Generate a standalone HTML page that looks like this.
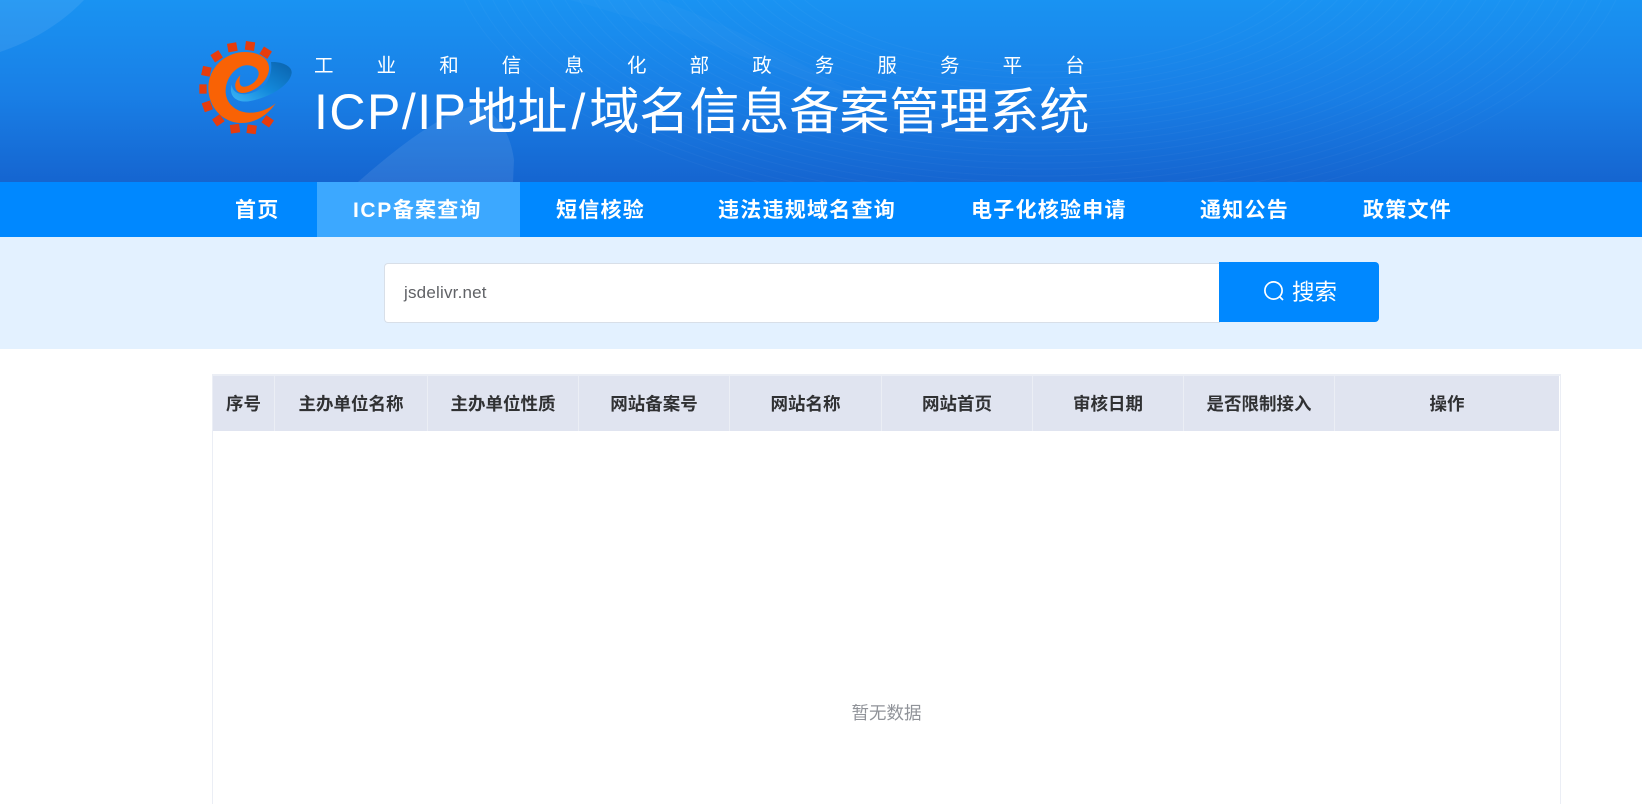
<!DOCTYPE html>
<html lang="zh-CN"><head><meta charset="utf-8"><title>ICP/IP地址/域名信息备案管理系统</title>
<style>
*{box-sizing:border-box}
html,body{margin:0;padding:0;width:1642px;height:797px;overflow:hidden;background:#fff;font-family:"Liberation Sans","Noto Sans CJK SC",sans-serif}
.a{position:absolute;white-space:nowrap}
#hd{position:absolute;left:0;top:0;width:1642px;height:182px;background:linear-gradient(180deg,#1993f2 0%,#197fe6 52%,#1565d0 100%);overflow:hidden}
#nav{position:absolute;left:0;top:182px;width:1642px;height:55px;background:#0088ff}
#nav span{position:absolute;top:0;line-height:57px;font-size:21px;font-weight:700;color:#fff;letter-spacing:1.25px;white-space:nowrap}
#nav span b{letter-spacing:1.6px;font-weight:700}
#act{position:absolute;left:317px;top:0;width:203px;height:55px;background:#3ca8ff}
#band{position:absolute;left:0;top:237px;width:1642px;height:112px;background:#e3f1ff}
#ipt{position:absolute;left:384px;top:263px;width:836px;height:60px;background:#fff;border:1px solid #d8dfe8;border-right:0;border-radius:4px 0 0 4px;font-size:17px;letter-spacing:.2px;line-height:58px;padding-left:19px;color:#606266}
#btn{position:absolute;left:1219px;top:262px;width:160px;height:60px;background:#0088ff;border-radius:0 4px 4px 0}
#tb{position:absolute;left:212px;top:374px;width:1349px;height:430px;border:1px solid #ebeef5;border-top:2px solid #ebeef5;border-bottom:0;background:#fff}
#th{position:absolute;left:0;top:0;width:1346px;height:55px;background:#e0e4f0}
.c{position:absolute;top:0;height:55px;line-height:56px;text-align:center;font-size:17.5px;font-weight:700;color:#303133;border-right:1px solid #ebeef5;white-space:nowrap}
</style></head><body>
<div id="hd">
<svg class="a" style="left:0;top:0" width="1642" height="182" viewBox="0 0 1642 182" fill="none">
<path d="M0 0H84C60 25 30 42 0 52Z" fill="#fff" fill-opacity=".08"/>
<path d="M358 182C400 145 440 115 475 105C495 110 510 130 514 160L513 182Z" fill="#fff" fill-opacity=".09"/>
<path d="M570 0H660C740 30 800 60 880 110C780 70 680 30 570 0Z" fill="#fff" fill-opacity=".025"/>
<g stroke="#fff" stroke-opacity=".03" stroke-width="1">
<ellipse cx="1040" cy="-60" rx="590" ry="275"/><ellipse cx="1040" cy="-60" rx="576" ry="268"/><ellipse cx="1040" cy="-60" rx="562" ry="262"/><ellipse cx="1040" cy="-60" rx="548" ry="255"/><ellipse cx="1040" cy="-60" rx="534" ry="249"/><ellipse cx="1040" cy="-60" rx="520" ry="242"/><ellipse cx="1040" cy="-60" rx="506" ry="236"/><ellipse cx="1040" cy="-60" rx="492" ry="229"/><ellipse cx="1040" cy="-60" rx="478" ry="223"/><ellipse cx="1040" cy="-60" rx="464" ry="216"/><ellipse cx="1040" cy="-60" rx="450" ry="210"/><ellipse cx="1040" cy="-60" rx="436" ry="203"/><ellipse cx="1040" cy="-60" rx="422" ry="197"/><ellipse cx="1040" cy="-60" rx="408" ry="190"/><ellipse cx="1040" cy="-60" rx="394" ry="184"/><ellipse cx="1040" cy="-60" rx="380" ry="177"/><ellipse cx="1040" cy="-60" rx="366" ry="171"/><ellipse cx="1040" cy="-60" rx="352" ry="164"/><ellipse cx="1040" cy="-60" rx="338" ry="158"/><ellipse cx="1040" cy="-60" rx="324" ry="151"/><ellipse cx="1040" cy="-60" rx="310" ry="145"/><ellipse cx="1040" cy="-60" rx="296" ry="138"/><ellipse cx="1040" cy="-60" rx="282" ry="132"/><ellipse cx="1040" cy="-60" rx="268" ry="125"/>
</g>
</svg>
<svg class="a" style="left:195px;top:38px" width="100" height="100" viewBox="0 0 300 300">
<defs>
<linearGradient id="b" x1="1" y1="0" x2="0" y2="1"><stop offset="0" stop-color="#0a62ac"/><stop offset=".55" stop-color="#1389dc"/><stop offset="1" stop-color="#3cb4f5"/></linearGradient>
</defs>
<g fill="#e63c0c">
<rect x="-14" y="-13" width="28" height="26" transform="translate(112 28) rotate(-10)"/>
<rect x="-14" y="-13" width="28" height="26" transform="translate(165 24) rotate(8)"/>
<rect x="-14" y="-13" width="28" height="26" transform="translate(212 44) rotate(32)"/>
<rect x="-14" y="-13" width="28" height="26" transform="translate(65 55) rotate(-32)"/>
<rect x="-13" y="-14" width="26" height="28" transform="translate(34 100) rotate(12)"/>
<rect x="-11" y="-14" width="22" height="28" transform="translate(24 153)"/>
<rect x="-13" y="-14" width="26" height="28" transform="translate(37 205) rotate(-20)"/>
<rect x="-14" y="-13" width="28" height="26" transform="translate(70 247) rotate(-35)"/>
<rect x="-14" y="-13" width="28" height="26" transform="translate(120 272) rotate(-8)"/>
<rect x="-14" y="-13" width="28" height="26" transform="translate(170 274) rotate(8)"/>
<rect x="-14" y="-13" width="28" height="26" transform="translate(218 250) rotate(35)"/>
</g>
<path d="M228 72C262 70 292 85 290 105C286 140 225 180 160 190C125 194 100 175 110 140C112 160 130 172 155 168C200 162 235 125 228 72Z" fill="url(#b)"/>
<path d="M242 196C215 235 175 257 135 255C80 252 40 205 40 150C40 90 90 42 150 42C195 42 225 65 222 95C218 135 170 167 140 165C118 163 112 135 136 112C130 135 135 148 150 146C175 142 196 118 190 100C184 84 160 78 142 84C110 96 90 130 92 165C96 203 130 226 170 224C200 222 225 210 242 196Z" fill="#f96205"/>
</svg>
<div class="a" style="left:314px;top:51px;font-size:19.5px;line-height:30px;color:#fff;letter-spacing:43.1px">工业和信息化部政务服务平台</div>
<div class="a" style="left:314px;top:77px;font-size:50px;line-height:70px;color:#fff"><span style="letter-spacing:1.5px">ICP/IP</span>地址<span style="letter-spacing:4px;padding-left:4px">/</span>域名信息备案管理系统</div>
</div>
<div id="nav">
<div id="act"></div>
<span style="left:235px">首页</span>
<span style="left:353px"><b>ICP</b>备案查询</span>
<span style="left:556px">短信核验</span>
<span style="left:718px">违法违规域名查询</span>
<span style="left:971px">电子化核验申请</span>
<span style="left:1200px">通知公告</span>
<span style="left:1363px">政策文件</span>
</div>
<div id="band"></div>
<div id="ipt">jsdelivr.net</div>
<div id="btn">
<svg class="a" style="left:44px;top:19px" width="22" height="21" viewBox="0 0 22 21" fill="none" stroke="#fff" stroke-width="1.7"><circle cx="10.5" cy="9.5" r="8.6"/><path d="M16.6 15.6L20 19"/></svg>
<div class="a" style="left:73px;top:13px;font-size:22.5px;line-height:36px;color:#fff">搜索</div>
</div>
<div id="tb">
<div id="th">
<div class="c" style="left:0;width:62px">序号</div>
<div class="c" style="left:62px;width:153px">主办单位名称</div>
<div class="c" style="left:215px;width:151px">主办单位性质</div>
<div class="c" style="left:366px;width:151px">网站备案号</div>
<div class="c" style="left:517px;width:152px">网站名称</div>
<div class="c" style="left:669px;width:151px">网站首页</div>
<div class="c" style="left:820px;width:151px">审核日期</div>
<div class="c" style="left:971px;width:151px">是否限制接入</div>
<div class="c" style="left:1122px;width:224px;border-right:0">操作</div>
</div>
<div class="a" style="left:1px;top:324px;width:1345px;text-align:center;font-size:17.5px;line-height:26px;color:#909399">暂无数据</div>
</div>
</body></html>
